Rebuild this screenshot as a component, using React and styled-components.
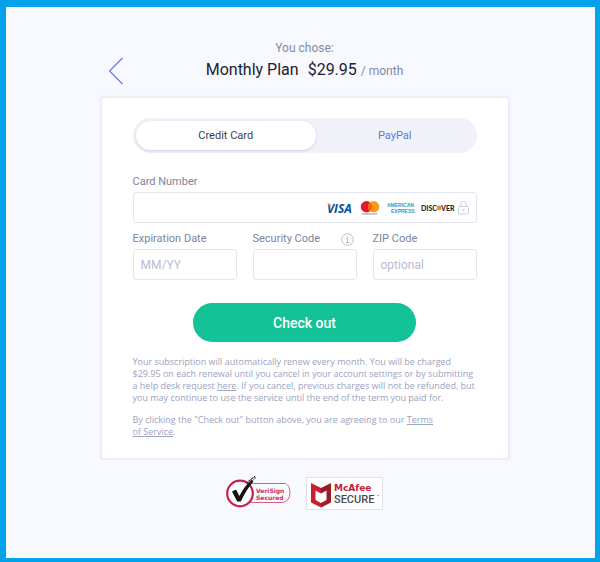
import React, { useState } from "react";
import styled, { createGlobalStyle } from "styled-components";

const GlobalStyle = createGlobalStyle`
  * { box-sizing: border-box; }
  body { margin: 0; font-family: Roboto, "Liberation Sans", sans-serif; color: #7c83a0; }
  button, input { font-family: inherit; }
`;

const Frame = styled.div`
  min-height: 100vh;
  border: solid #04a2e9;
  border-width: 7px 5px 4px 6px;
  background: #f8f9fe;
  padding: 32px 16px 32px 24px;
`;

const Checkout = styled.main`
  width: 100%;
  max-width: 408px;
  margin: 0 auto;
`;

const Header = styled.header`
  display: grid;
  grid-template-columns: 32px 1fr 32px;
  align-items: end;
  height: 58px;
  padding-bottom: 13px;
`;

const BackButton = styled.button`
  display: flex;
  padding: 0 0 0 7px;
  border: 0;
  background: none;
  cursor: pointer;
`;

const Chosen = styled.div`
  text-align: center;
  white-space: nowrap;
`;

const Eyebrow = styled.p`
  margin: 0;
  font-size: 12px;
  line-height: 18px;
  color: #8389a3;
`;

const Title = styled.h1`
  margin: 0;
  padding-bottom: 1px;
  font-size: 16px;
  line-height: 25px;
  font-weight: 400;
  color: #1f2130;
  display: flex;
  justify-content: center;
  align-items: baseline;
`;

const Price = styled.span`
  margin-left: 9px;
`;

const Period = styled.span`
  margin-left: 4px;
  font-size: 12px;
  color: #8389a3;
`;

const Card = styled.form`
  background: #fff;
  border: 1px solid #e8eaf4;
  box-shadow: 0 0 3px #e3e6f2;
  padding: 20px 31px;
`;

const Toggle = styled.div`
  display: grid;
  grid-template-columns: 181fr 158fr;
  height: 35px;
  padding: 3px;
  border-radius: 18px;
  background: #f0f1f9;
`;

const ToggleButton = styled.button`
  border: 0;
  border-radius: 15px;
  padding: 0;
  font-size: 11px;
  cursor: pointer;
  color: ${(p) => (p.$active ? "#3b3e4e" : "#5b77e4")};
  background: ${(p) => (p.$active ? "#fff" : "transparent")};
  box-shadow: ${(p) => (p.$active ? "0 1px 3px #cfd2e2" : "none")};
`;

const Field = styled.div`
  min-width: 0;
  margin-top: ${(p) => p.$top}px;
`;

const LabelRow = styled.div`
  display: flex;
  justify-content: space-between;
  align-items: center;
  height: 18px;
  padding-right: 3px;
`;

const Label = styled.label`
  font-size: 11px;
  line-height: 16px;
  color: #7c83a0;
  white-space: nowrap;
`;

const InfoButton = styled.button`
  display: flex;
  padding: 0;
  border: 0;
  background: none;
`;

const InputShell = styled.div`
  display: flex;
  align-items: center;
  height: 31px;
  margin-top: 1px;
  padding: 0 7px;
  border: 1px solid #e3e6f1;
  border-radius: 3px;
  background: #fff;
`;

const Input = styled.input`
  flex: 1;
  min-width: 0;
  width: 100%;
  border: 0;
  padding: 0;
  outline: 0;
  background: none;
  font-size: 12px;
  color: #3b3e4e;
  &::placeholder { color: #b7bdd3; opacity: 1; }
`;

const Brands = styled.div`
  display: flex;
  align-items: center;
  flex: none;
`;

const Fields = styled.div`
  display: grid;
  grid-template-columns: repeat(3, 1fr);
  gap: 16px;
`;

const Submit = styled.button`
  display: block;
  width: 65%;
  height: 39px;
  margin: 23px auto 0;
  border: 0;
  border-radius: 20px;
  background: #14c297;
  color: #fff;
  font-size: 14px;
  font-weight: 500;
  cursor: pointer;
`;

const Legal = styled.p`
  margin: ${(p) => p.$top}px 0 0;
  font-family: "Open Sans", Roboto, sans-serif;
  font-size: 9px;
  line-height: 12px;
  color: #9ba3c0;
  white-space: nowrap;
`;

const LegalLink = styled.a`
  color: inherit;
  text-decoration: underline;
`;

const Badges = styled.footer`
  display: flex;
  justify-content: center;
  align-items: flex-end;
  gap: 14px;
  margin-top: 16px;
`;

const CardBrands = () => (
  <svg width="143" height="20" viewBox="326 198 143 20" role="img" aria-label="Visa, Mastercard, American Express, Discover">
    <text x="327" y="212.5" fontFamily="Open Sans, sans-serif" fontSize="12" fontWeight="700" fontStyle="italic" fill="#0b4e9c">VISA</text>
    <path d="M326.5 203.5h3.5l1.4 3.7q-1.8-2.6-4.9-3.7z" fill="#f0b323" />
    <circle cx="366.5" cy="206.8" r="5.7" fill="#e5172b" />
    <circle cx="373.6" cy="206.8" r="5.7" fill="#f79b20" />
    <path d="M370 202.4a5.7 5.7 0 0 1 0 8.8a5.7 5.7 0 0 1 0-8.8z" fill="#fb5d16" />
    <text x="362" y="215" fontFamily="Roboto, sans-serif" fontSize="3" fill="#777">mastercard</text>
    <g fontFamily="Liberation Sans, sans-serif" fontWeight="700" fontSize="5" fill="#2a9dc7">
      <text x="387" y="207">AMERICAN</text>
      <text x="391" y="213">EXPRESS</text>
    </g>
    <g fontFamily="Lato, sans-serif" fontSize="7" fontWeight="900" fill="#29292f">
      <text x="421" y="210.5">DISC</text>
      <text x="441" y="210.5">VER</text>
    </g>
    <circle cx="439" cy="208" r="2.4" fill="#f28a22" />
    <g fill="none" stroke="#cdd0da" strokeWidth="1">
      <rect x="458.5" y="206.5" width="10" height="7.5" rx="1" />
      <path d="M460.5 206.5v-2a3 3 0 0 1 6 0v2" />
    </g>
    <circle cx="463.5" cy="210" r="0.9" fill="#bfc3cf" />
  </svg>
);

const VeriSign = () => (
  <svg width="66" height="35" viewBox="226 475 66 35" role="img" aria-label="VeriSign Secured">
    <path d="M251 483.5h35M250 502.5h32q8-1 8-10q0-6-3-8" fill="none" stroke="#dc5c84" />
    <circle cx="240" cy="493.5" r="12.8" fill="#fff" stroke="#c3204f" strokeWidth="2.2" />
    <path d="M232 491.5l4-2 3.4 6.5q5-10 12-16l2 1.4q-7 8-12.6 20h-3.6z" fill="#111" />
    <path d="M247 483l8-7M250 483l6-5.5M248.5 481l7.5-5" fill="none" stroke="#222" strokeDasharray="2 1" />
    <g fontFamily="DejaVu Sans, sans-serif" fontWeight="700" fontSize="6" fill="#ca3264">
      <text x="256" y="493">VeriSign</text>
      <text x="256" y="500">Secured</text>
    </g>
  </svg>
);

const McAfee = () => (
  <svg width="77" height="33" viewBox="306 477 77 33" role="img" aria-label="McAfee Secure">
    <rect x="306.5" y="477.5" width="76" height="32" fill="#fff" stroke="#e2e2e6" />
    <path d="M311 483l10 5v5.5l-5.5-3v9.5l5.5 3v4.5l-10-5z" fill="#c8202e" />
    <path d="M331 483l-10 5v5.5l5.5-3v9.5l-5.5 3v4.5l10-5z" fill="#9e1b29" />
    <text x="334" y="491" fontFamily="DejaVu Sans, sans-serif" fontWeight="700" fontSize="9" fill="#c52035">McAfee</text>
    <text x="334" y="503" fontFamily="Roboto, sans-serif" fontWeight="500" fontSize="11" fill="#4a4a50">SECURE</text>
    <path d="M377 495.5h2" stroke="#999" strokeWidth="0.8" />
  </svg>
);

export default function App() {
  const [method, setMethod] = useState("card");
  return (
    <>
      <GlobalStyle />
      <Frame>
        <Checkout>
          <Header>
            <BackButton type="button" aria-label="Back">
              <svg width="16" height="28" viewBox="0 0 16 28" fill="none" stroke="#6684dc" strokeWidth="1.3">
                <path d="M14.5 1L1.5 14L14.5 27" />
              </svg>
            </BackButton>
            <Chosen>
              <Eyebrow>You chose:</Eyebrow>
              <Title>
                Monthly Plan<Price>$29.95</Price><Period>/ month</Period>
              </Title>
            </Chosen>
          </Header>
          <Card onSubmit={(e) => e.preventDefault()}>
            <Toggle>
              <ToggleButton type="button" $active={method === "card"} aria-pressed={method === "card"} onClick={() => setMethod("card")}>Credit Card</ToggleButton>
              <ToggleButton type="button" $active={method === "paypal"} aria-pressed={method === "paypal"} onClick={() => setMethod("paypal")}>PayPal</ToggleButton>
            </Toggle>
            <Field $top={20}>
              <LabelRow><Label htmlFor="number">Card Number</Label></LabelRow>
              <InputShell>
                <Input id="number" inputMode="numeric" />
                <Brands><CardBrands /></Brands>
              </InputShell>
            </Field>
            <Fields>
              <Field $top={7}>
                <LabelRow><Label htmlFor="expiry">Expiration Date</Label></LabelRow>
                <InputShell><Input id="expiry" placeholder="MM/YY" /></InputShell>
              </Field>
              <Field $top={7}>
                <LabelRow>
                  <Label htmlFor="code">Security Code</Label>
                  <InfoButton type="button" aria-label="About the security code">
                    <svg width="13" height="13" viewBox="0 0 13 13" fill="none" stroke="#b4b9cb">
                      <circle cx="6.5" cy="6.5" r="5.8" strokeWidth="0.9" />
                      <path d="M5 5.5h1.5v4M4.8 9.5h3.4M6.5 3v1.3" />
                    </svg>
                  </InfoButton>
                </LabelRow>
                <InputShell><Input id="code" /></InputShell>
              </Field>
              <Field $top={7}>
                <LabelRow><Label htmlFor="zip">ZIP Code</Label></LabelRow>
                <InputShell><Input id="zip" placeholder="optional" /></InputShell>
              </Field>
            </Fields>
            <Submit type="submit">Check out</Submit>
            <Legal $top={14}>
              Your subscription will automatically renew every month. You will be charged<br />
              $29.95 on each renewal until you cancel in your account settings or by submitting<br />
              a help desk request <LegalLink href="#help">here</LegalLink>. If you cancel, previous charges will not be refunded, but<br />
              you may continue to use the service until the end of the term you paid for.
            </Legal>
            <Legal $top={10}>
              By clicking the "Check out" button above, you are agreeing to our{" "}
              <LegalLink href="#terms">Terms<br />of Service</LegalLink>.
            </Legal>
          </Card>
          <Badges>
            <VeriSign />
            <McAfee />
          </Badges>
        </Checkout>
      </Frame>
    </>
  );
}
